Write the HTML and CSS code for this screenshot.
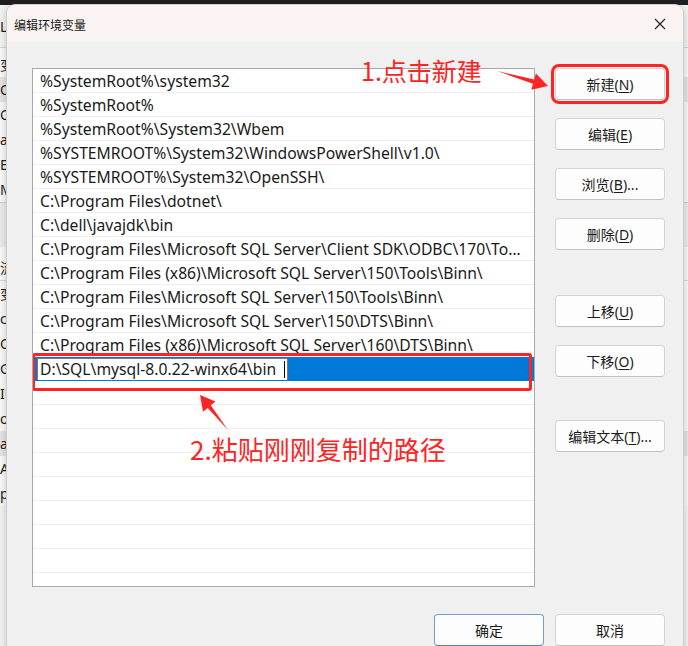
FILE: index.html
```html
<!DOCTYPE html>
<html lang="zh-CN">
<head>
    <meta charset="UTF-8">
    <title>编辑环境变量</title>
    <link rel="stylesheet" href="styles.css">
</head>
<body>
    <div class="desk">
        <div class="backwin">
            <div class="bw-head">LL</div>
            <div class="bw-rows">
                <div class="bw-row">变量</div>
                <div class="bw-row bw-sel">Or</div>
                <div class="bw-row">Or</div>
                <div class="bw-row">a</div>
                <div class="bw-row">E</div>
                <div class="bw-row">M</div>
            </div>
            <div class="bw-gap"></div>
            <div class="bw-rows bw-lower">
                <div class="bw-row bw-line">流</div>
                <div class="bw-row">变量</div>
                <div class="bw-row">c</div>
                <div class="bw-row">Or</div>
                <div class="bw-row">G</div>
                <div class="bw-row">IU</div>
                <div class="bw-row">os</div>
                <div class="bw-row bw-sel">a</div>
                <div class="bw-row">A</div>
                <div class="bw-row">p</div>
            </div>
        </div>

        <div class="dialog">
            <div class="titlebar">
                <span class="title">编辑环境变量</span>
                <svg class="close" width="12" height="12" viewBox="0 0 12 12">
                    <path d="M1 1 L11 11 M11 1 L1 11" stroke="#1f1f1f" stroke-width="1.1" fill="none"/>
                </svg>
            </div>

            <div class="content">
                <div class="main">
                    <div class="pathlist">
                        <div class="row">%SystemRoot%\system32</div>
                        <div class="row">%SystemRoot%</div>
                        <div class="row">%SystemRoot%\System32\Wbem</div>
                        <div class="row">%SYSTEMROOT%\System32\WindowsPowerShell\v1.0\</div>
                        <div class="row">%SYSTEMROOT%\System32\OpenSSH\</div>
                        <div class="row">C:\Program Files\dotnet\</div>
                        <div class="row">C:\dell\javajdk\bin</div>
                        <div class="row">C:\Program Files\Microsoft SQL Server\Client SDK\ODBC\170\Tools\Binn\</div>
                        <div class="row">C:\Program Files (x86)\Microsoft SQL Server\150\Tools\Binn\</div>
                        <div class="row">C:\Program Files\Microsoft SQL Server\150\Tools\Binn\</div>
                        <div class="row">C:\Program Files\Microsoft SQL Server\150\DTS\Binn\</div>
                        <div class="row">C:\Program Files (x86)\Microsoft SQL Server\160\DTS\Binn\</div>
                        <div class="row row-edit">
                            <div class="editbox">D:\SQL\mysql-8.0.22-winx64\bin<span class="caret"></span></div>
                        </div>
                        <div class="row"></div>
                        <div class="row"></div>
                        <div class="row"></div>
                        <div class="row"></div>
                        <div class="row"></div>
                        <div class="row"></div>
                        <div class="row"></div>
                        <div class="row"></div>
                        <div class="row"></div>
                        <div class="mark-row"></div>
                    </div>

                    <div class="actions">
                        <button class="btn btn-marked">新建(<u>N</u>)</button>
                        <button class="btn">编辑(<u>E</u>)</button>
                        <button class="btn">浏览(<u>B</u>)...</button>
                        <button class="btn">删除(<u>D</u>)</button>
                        <button class="btn group-start">上移(<u>U</u>)</button>
                        <button class="btn">下移(<u>O</u>)</button>
                        <button class="btn text-start">编辑文本(<u>T</u>)...</button>
                    </div>
                </div>

                <div class="footer">
                    <button class="btn btn-default">确定</button>
                    <button class="btn">取消</button>
                </div>
            </div>
        </div>

        <svg class="arrows" width="688" height="646" viewBox="0 0 688 646">
            <polygon points="497,71 534.2,79.6 535.9,73.6 548,86 531.3,89.8 533,83.8" fill="#ff2424"/>
            <polygon points="228,430 210.8,405.3 215.5,401.4 200,395 203,411.8 207.7,407.9" fill="#ff2424"/>
        </svg>
        <div class="note note-1">1.点击新建</div>
        <div class="note note-2">2.粘贴刚刚复制的路径</div>
    </div>
</body>
</html>
```

FILE: styles.css
```css
:root {
    --ui-font: "Noto Sans", "Noto Sans CJK SC", sans-serif;
    --cjk-font: "Noto Sans CJK SC", sans-serif;
    --mark-red: #ff2424;
}

body {
    margin: 0;
    background: #202020;
    font-family: var(--ui-font);
    color: #1a1a1a;
    overflow: hidden;
}

.desk {
    position: relative;
    width: 688px;
    height: 646px;
    overflow: hidden;
}

/* window behind the dialog */
.backwin {
    margin-top: 5px;
    height: 641px;
    background: #f3f3f3;
    font-size: 14px;
    color: #222;
}

.bw-head {
    height: 42px;
    line-height: 44px;
    border-bottom: 1px solid #d6d6d6;
}

.bw-rows {
    padding-top: 4px;
    background: #f9f9f9;
}

.bw-row {
    height: 25px;
    line-height: 25px;
}

.bw-sel {
    background: #e4e4e4;
}

.bw-gap {
    height: 44px;
    border-top: 1px solid #d0d0d0;
    background: #ececec;
}

.bw-lower {
    padding-top: 8px;
}

.bw-line {
    border-bottom: 1px solid #d6d6d6;
}

/* dialog */
.dialog {
    position: absolute;
    left: 7px;
    top: 5px;
    width: 676px;
    height: 680px;
    background: #f0f0f0;
    border-radius: 8px 8px 0 0;
    box-shadow: 0 0 0 1px #cfcfcf, 0 2px 10px rgba(0, 0, 0, 0.25);
    overflow: hidden;
}

.titlebar {
    height: 37px;
    display: flex;
    align-items: center;
    justify-content: space-between;
    padding: 0 17px 0 7px;
    background: #f9f3f2;
}

.title {
    font-family: var(--cjk-font);
    font-size: 12px;
    color: #1a1a1a;
    padding-top: 1px;
}

.close {
    display: block;
}

.content {
    padding: 26px 0 0 25px;
}

.main {
    display: flex;
    gap: 20px;
}

.pathlist {
    position: relative;
    width: 503px;
    height: 519px;
    box-sizing: border-box;
    border: 1px solid #a9a9a9;
    background: #fff;
    overflow: hidden;
}

.row {
    height: 24px;
    box-sizing: border-box;
    border-bottom: 1px solid #efefef;
    padding: 2px 6px 0 7px;
    font-size: 15.7px;
    line-height: 21px;
    white-space: nowrap;
    overflow: hidden;
    text-overflow: ellipsis;
}

.row-edit {
    background: #0078d7;
    padding: 1px 0 0 4px;
    border-bottom-color: #0078d7;
}

.editbox {
    width: 251px;
    height: 23px;
    box-sizing: border-box;
    border: 1px solid #7a7a7a;
    background: #fff;
    padding-left: 2px;
    line-height: 21px;
}

.caret {
    display: inline-block;
    width: 1px;
    height: 17px;
    margin-left: 8px;
    background: #000;
    vertical-align: -3px;
}

.mark-row {
    position: absolute;
    left: -1px;
    top: 284px;
    width: 500px;
    height: 38px;
    box-sizing: border-box;
    border: 3px solid var(--mark-red);
    border-radius: 3px;
}

.actions {
    display: flex;
    flex-direction: column;
    gap: 18px;
}

.btn {
    width: 110px;
    height: 32px;
    padding: 0;
    background: #fdfdfd;
    border: 1px solid #d4d4d4;
    border-bottom-color: #c2c2c2;
    border-radius: 4px;
    font-family: var(--ui-font);
    font-size: 14px;
    color: #1b1b1b;
}

.btn u {
    text-underline-offset: 2px;
}

.btn-marked {
    outline: 3px solid var(--mark-red);
    outline-offset: 1px;
}

.group-start {
    margin-top: 27px;
}

.text-start {
    margin-top: 25px;
}

.footer {
    display: flex;
    justify-content: flex-end;
    gap: 11px;
    margin-top: 27px;
    padding-right: 18px;
}

.btn-default {
    border-color: #6f9fd6;
    border-bottom-color: #4a86c8;
}

/* annotations */
.arrows {
    position: absolute;
    left: 0;
    top: 0;
    pointer-events: none;
}

.note {
    position: absolute;
    font-family: var(--cjk-font);
    color: var(--mark-red);
    white-space: nowrap;
}

.note-1 {
    left: 361px;
    top: 52px;
    font-size: 25px;
}

.note-2 {
    left: 190px;
    top: 430px;
    font-size: 26px;
}
```
